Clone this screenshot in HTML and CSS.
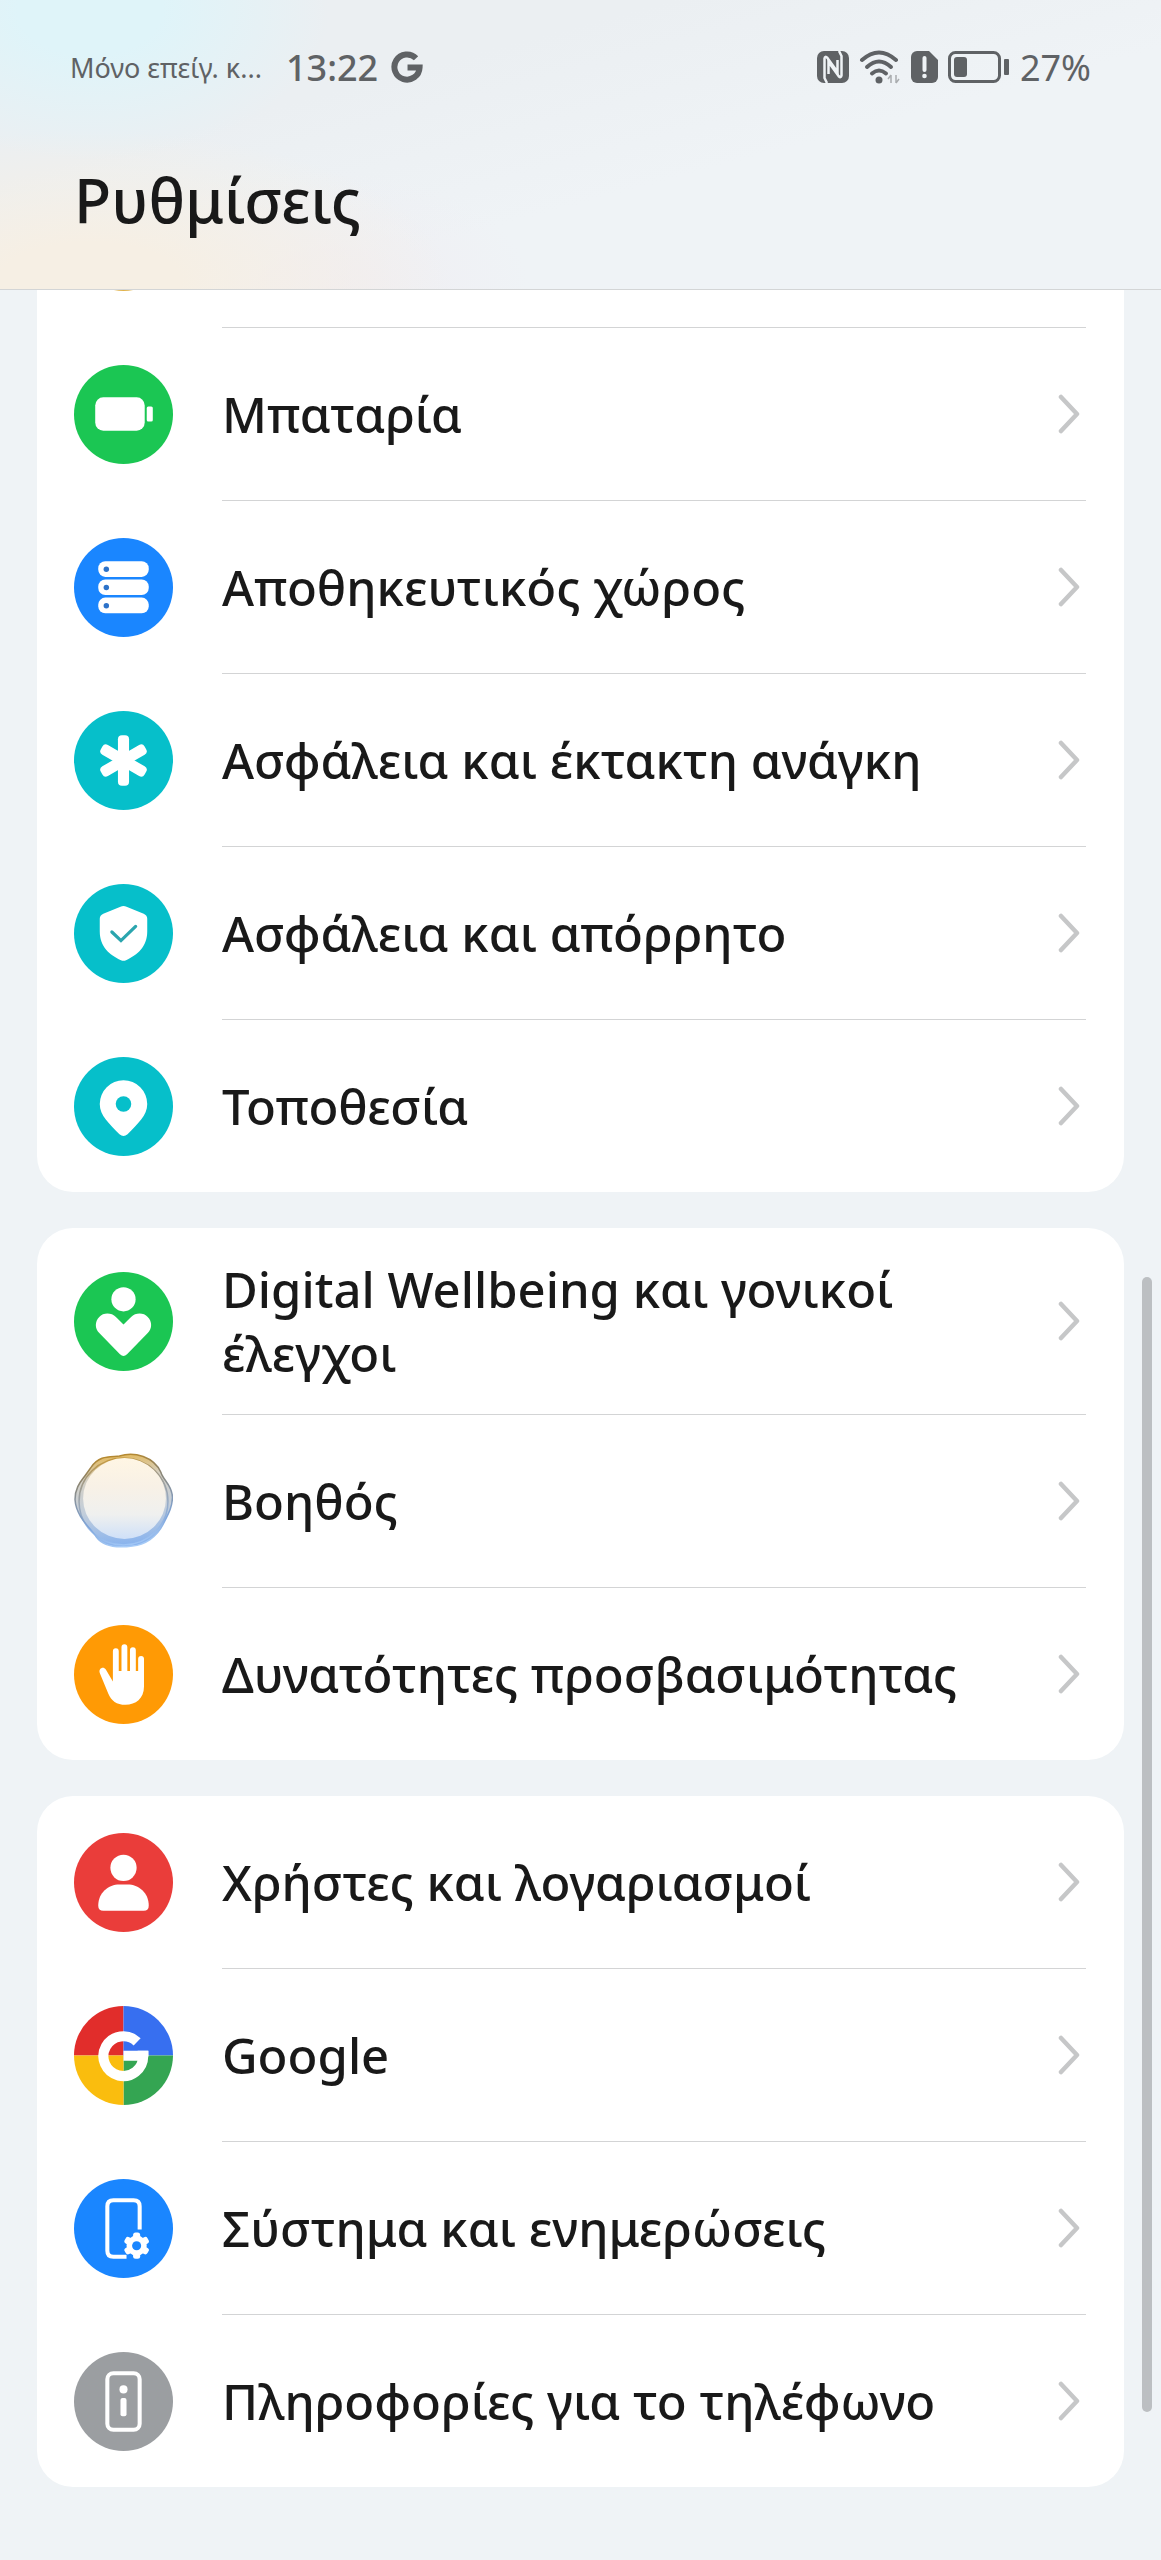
FILE: index.html
```html
<!DOCTYPE html>
<html lang="el">
<head>
  <meta charset="UTF-8">
  <meta name="viewport" content="width=device-width, initial-scale=1">
  <title>Ρυθμίσεις</title>
  <link rel="stylesheet" href="styles.css">
</head>
<body>

  <svg class="defs" aria-hidden="true">
    <symbol id="chevron" viewBox="0 0 28 44">
      <path d="M3 5 19 22 3 39" fill="none" stroke="#c6c7c8" stroke-width="4.5" stroke-linecap="round" stroke-linejoin="round"/>
    </symbol>
  </svg>

  <header class="top">
    <!-- Status bar -->
    <div class="status">
      <span class="carrier">Μόνο επείγ. κ...</span>
      <span class="clock">13:22</span>
      <svg class="google" viewBox="0 0 30 30" width="32" height="32" aria-label="Google">
        <path d="M23.5 6.8A11.8 11.8 0 1 0 26.8 15.5H15.5" fill="none" stroke="currentColor" stroke-width="5.6"/>
      </svg>
      <div class="status-icons">
        <svg viewBox="0 0 32 32" width="32" height="32" aria-label="NFC">
          <rect width="32" height="32" rx="7" fill="currentColor"/>
          <path d="M10 32 7.5 27V7.500Q8 4.500 10.500 7L20.500 21V9" fill="none" stroke="#eff3f6" stroke-width="2.5"/>
          <path d="M22 0 24.500 5V24.500Q24 27.500 21.500 25L11.500 11V23" fill="none" stroke="#eff3f6" stroke-width="2.5"/>
        </svg>
        <svg viewBox="0 0 42 34" width="42" height="34" aria-label="Wi-Fi">
          <g fill="none" stroke="currentColor" stroke-width="4" stroke-linecap="round">
            <path d="M3 10Q20 -5 37 10"/>
            <path d="M8 17Q20 6 32 17"/>
            <path d="M13 23.5Q20 17.5 27 23.5"/>
          </g>
          <circle cx="20" cy="30" r="3.5" fill="currentColor"/>
          <path d="M32 25V33M32 25 29 29M37 25V33M37 33 40 29" stroke="#a9acae" stroke-width="1.5" fill="none"/>
        </svg>
        <svg viewBox="0 0 27 32" width="27" height="32" aria-label="SIM">
          <path d="M6 0H18L27 9V26A6 6 0 0 1 21 32H6A6 6 0 0 1 0 26V6A6 6 0 0 1 6 0Z" fill="currentColor"/>
          <path d="M13.5 7V19" stroke="#eff3f6" stroke-width="4" stroke-linecap="round"/>
          <circle cx="13.5" cy="25" r="2.3" fill="#eff3f6"/>
        </svg>
        <svg viewBox="0 0 62 32" width="62" height="32" aria-hidden="true">
          <rect x="1.500" y="1.500" width="50" height="29" rx="6" fill="none" stroke="currentColor" stroke-width="3"/>
          <rect x="6" y="6" width="13" height="20" rx="3" fill="currentColor"/>
          <rect x="56" y="8" width="5" height="16" rx="1" fill="currentColor"/>
        </svg>
        <span class="percent">27%</span>
      </div>
    </div>
    <h1>Ρυθμίσεις</h1>
  </header>

  <main class="settings">

    <nav class="card">
      <a href="#" class="row" tabindex="-1" aria-hidden="true">
        <svg class="icon" viewBox="0 0 98 98"><circle cx="49" cy="49" r="49" fill="#e0b24a"/></svg>
        <span class="label"></span>
      </a>
      <a href="#" class="row">
        <svg class="icon" viewBox="0 0 98 98">
          <circle cx="49" cy="49" r="49" fill="#1bc653"/>
          <rect x="21" y="32" width="49" height="33" rx="8" fill="#fff"/>
          <rect x="72" y="41" width="6" height="15" rx="1.5" fill="#fff"/>
        </svg>
        <span class="label">Μπαταρία</span>
        <svg class="chevron"><use href="#chevron"/></svg>
      </a>
      <a href="#" class="row">
        <svg class="icon" viewBox="0 0 98 98">
          <circle cx="49" cy="49" r="49" fill="#1a86ff"/>
          <g fill="#fff">
            <rect x="24" y="23" width="50" height="15.5" rx="7"/>
            <rect x="24" y="41" width="50" height="15.5" rx="7"/>
            <rect x="24" y="59" width="50" height="15.5" rx="7"/>
          </g>
          <g fill="#2c72c9">
            <circle cx="32" cy="31" r="2.7"/>
            <circle cx="32" cy="49" r="2.7"/>
            <circle cx="32" cy="67" r="2.7"/>
          </g>
        </svg>
        <span class="label">Αποθηκευτικός χώρος</span>
        <svg class="chevron"><use href="#chevron"/></svg>
      </a>
      <a href="#" class="row">
        <svg class="icon" viewBox="0 0 98 98">
          <circle cx="49" cy="49" r="49" fill="#06bfca"/>
          <g fill="#fff">
            <rect x="43.5" y="24" width="11" height="50" rx="4"/>
            <rect x="43.5" y="24" width="11" height="50" rx="4" transform="rotate(60 49 49)"/>
            <rect x="43.5" y="24" width="11" height="50" rx="4" transform="rotate(120 49 49)"/>
          </g>
        </svg>
        <span class="label">Ασφάλεια και έκτακτη ανάγκη</span>
        <svg class="chevron"><use href="#chevron"/></svg>
      </a>
      <a href="#" class="row">
        <svg class="icon" viewBox="0 0 98 98">
          <circle cx="49" cy="49" r="49" fill="#06bfca"/>
          <path d="M46 22.5Q49 21 52 22.5L69 29.5Q72.5 31 72.5 34.5V47C72.5 62 63 70 51.5 75.5Q49 76.5 46.5 75.5C35 70 25.5 62 25.5 47V34.5Q25.5 31 29 29.5Z" fill="#fff"/>
          <path d="M37.5 47.5 46.5 56 61 42" fill="none" stroke="#2aa5ae" stroke-width="3.2" stroke-linecap="round"/>
        </svg>
        <span class="label">Ασφάλεια και απόρρητο</span>
        <svg class="chevron"><use href="#chevron"/></svg>
      </a>
      <a href="#" class="row">
        <svg class="icon" viewBox="0 0 98 98">
          <circle cx="49" cy="49" r="49" fill="#06bfca"/>
          <path d="M49 23A23.5 23.5 0 0 0 25.5 46.5C25.5 58 35 66 45 76.5Q49 80 53 76.5C63 66 72.5 58 72.5 46.5A23.5 23.5 0 0 0 49 23Z" fill="#fff"/>
          <circle cx="49" cy="46.5" r="7.7" fill="#06bfca"/>
        </svg>
        <span class="label">Τοποθεσία</span>
        <svg class="chevron"><use href="#chevron"/></svg>
      </a>
    </nav>

    <nav class="card">
      <a href="#" class="row">
        <svg class="icon" viewBox="0 0 98 98">
          <circle cx="49" cy="49" r="49" fill="#1bc653"/>
          <circle cx="49" cy="27" r="12" fill="#fff"/>
          <path d="M49 52 41.5 44.5C37 40 29 40 25 44.5C20.5 49 20.5 56 25 60.5L45.5 81.5Q49 85 52.5 81.5L73 60.5C77.5 56 77.5 49 73 44.5C69 40 61 40 56.5 44.5Z" fill="#fff"/>
        </svg>
        <span class="label">Digital Wellbeing και γονικοί έλεγχοι</span>
        <svg class="chevron"><use href="#chevron"/></svg>
      </a>
      <a href="#" class="row">
        <svg class="icon" viewBox="0 0 98 98">
          <defs>
            <linearGradient id="rim" x1="0.4" y1="0" x2="0.55" y2="1">
              <stop offset="0" stop-color="#b98a2c"/>
              <stop offset="0.2" stop-color="#8d8164"/>
              <stop offset="0.45" stop-color="#8794a3"/>
              <stop offset="0.75" stop-color="#7ea6dd"/>
              <stop offset="1" stop-color="#a9cdf8"/>
            </linearGradient>
            <linearGradient id="film" x1="0.4" y1="0" x2="0.5" y2="1">
              <stop offset="0" stop-color="#e3b95c"/>
              <stop offset="0.25" stop-color="#d5d0c4"/>
              <stop offset="0.6" stop-color="#c3cedb"/>
              <stop offset="1" stop-color="#86b2ef"/>
            </linearGradient>
            <linearGradient id="pearl" x1="0.5" y1="0" x2="0.5" y2="1">
              <stop offset="0" stop-color="#fff6e4"/>
              <stop offset="0.35" stop-color="#f8f1e6"/>
              <stop offset="0.7" stop-color="#eff0ef"/>
              <stop offset="1" stop-color="#cfe0f8"/>
            </linearGradient>
          </defs>
          <path d="M17 15C25 3 35 5 45 4C60 -1 79 5 86 20C88 28 97 32 97.5 45C97 56 93 62 88 72C82 84 70 92 58 93C44 95 29 94 22 84C16 75 2 64 1 47C1 34 8 28 12 22Z" fill="url(#film)" stroke="url(#rim)" stroke-width="1.5"/>
          <ellipse cx="49" cy="49" rx="44" ry="43" fill="none" stroke="url(#rim)" stroke-width="1.5" opacity="0.7"/>
          <ellipse cx="50" cy="46" rx="41" ry="40" fill="url(#pearl)"/>
        </svg>
        <span class="label">Βοηθός</span>
        <svg class="chevron"><use href="#chevron"/></svg>
      </a>
      <a href="#" class="row">
        <svg class="icon" viewBox="0 0 98 98">
          <circle cx="49" cy="49" r="49" fill="#ff9a05"/>
          <path d="M38.5 56V26A2.9 2.9 0 0 1 44.3 26V45.5H47V22A2.9 2.9 0 0 1 52.8 22V45.5H55.4V25A2.9 2.9 0 0 1 61.2 25V45.5H63.5V33.5A2.9 2.9 0 0 1 69.3 33.5V61C69.3 73 61 79 51 79C42 79 37 75 34 68L25.5 47.5C24 43 29 40.5 31.5 44Z" fill="#fff"/>
        </svg>
        <span class="label">Δυνατότητες προσβασιμότητας</span>
        <svg class="chevron"><use href="#chevron"/></svg>
      </a>
    </nav>

    <nav class="card">
      <a href="#" class="row">
        <svg class="icon" viewBox="0 0 98 98">
          <circle cx="49" cy="49" r="49" fill="#ea3d3a"/>
          <circle cx="49" cy="34.5" r="13" fill="#fff"/>
          <path d="M24 72C24 59 34 51 45 51H53C64 51 74 59 74 72Q74 77 69 77H29Q24 77 24 72Z" fill="#fff"/>
        </svg>
        <span class="label">Χρήστες και λογαριασμοί</span>
        <svg class="chevron"><use href="#chevron"/></svg>
      </a>
      <a href="#" class="row">
        <svg class="icon" viewBox="0 0 98 98">
          <path d="M49 49V0A49 49 0 0 0 0 49Z" fill="#e12d2b"/>
          <path d="M49 49H98A49 49 0 0 0 49 0Z" fill="#376ff0"/>
          <path d="M49 49V98A49 49 0 0 0 98 49Z" fill="#34a552"/>
          <path d="M49 49H0A49 49 0 0 0 49 98Z" fill="#fabd0e"/>
          <path d="M62.5 35.5A19.7 19.7 0 1 0 68.5 49.3H49" fill="none" stroke="#fff" stroke-width="10"/>
          <path d="M63 44.3H73.7V50H63Z" fill="#fff"/>
        </svg>
        <span class="label">Google</span>
        <svg class="chevron"><use href="#chevron"/></svg>
      </a>
      <a href="#" class="row">
        <svg class="icon" viewBox="0 0 98 98">
          <circle cx="49" cy="49" r="49" fill="#1a86ff"/>
          <path d="M65 50V27Q65 21 59 21H39Q33 21 33 27V71Q33 77 39 77H52" fill="none" stroke="#fff" stroke-width="4"/>
          <g fill="#fff" transform="translate(62 66)">
            <circle r="10"/>
            <rect x="-3.5" y="-13" width="7" height="26" rx="2.5"/>
            <rect x="-3.5" y="-13" width="7" height="26" rx="2.5" transform="rotate(60)"/>
            <rect x="-3.5" y="-13" width="7" height="26" rx="2.5" transform="rotate(120)"/>
            <circle r="4.5" fill="#1a86ff"/>
          </g>
        </svg>
        <span class="label">Σύστημα και ενημερώσεις</span>
        <svg class="chevron"><use href="#chevron"/></svg>
      </a>
      <a href="#" class="row">
        <svg class="icon" viewBox="0 0 98 98">
          <circle cx="49" cy="49" r="49" fill="#9b9ea1"/>
          <rect x="33" y="21" width="32" height="56" rx="6" fill="none" stroke="#fff" stroke-width="4"/>
          <circle cx="49" cy="37" r="4" fill="#fff"/>
          <rect x="46" y="45.5" width="6" height="18" rx="2" fill="#fff"/>
        </svg>
        <span class="label">Πληροφορίες για το τηλέφωνο</span>
        <svg class="chevron"><use href="#chevron"/></svg>
      </a>
    </nav>

  </main>

  <div class="scrollbar"></div>

</body>
</html>
```

FILE: styles.css
```css
* {
  box-sizing: border-box;
}

body {
  margin: 0;
  min-height: 100vh;
  background: #eff3f6;
  color: #191919;
  font-family: "Noto Sans", "Open Sans", sans-serif;
  font-weight: 500;
}

.defs {
  display: none;
}

/* Header stays over the list while it scrolls */
.top {
  position: fixed;
  top: 0;
  left: 0;
  right: 0;
  z-index: 2;
  padding: 43px 70px 49px;
  border-bottom: 1px solid #d3d5d6;
  background:
    radial-gradient(ellipse 240px 150px at 90px 10px, #dff4f9 30%, transparent),
    radial-gradient(ellipse 360px 150px at 90px 280px, #f6efe4 25%, transparent),
    radial-gradient(ellipse 200px 120px at 330px 290px, #f0edf2, transparent),
    linear-gradient(165deg, #ebeff2 30%, #eff3f6 60%);
}

.status {
  display: flex;
  align-items: center;
  height: 48px;
  color: #5f6265;
}

.carrier {
  font-size: 27px;
  font-weight: 400;
}

.clock {
  margin: 0 13px 0 24px;
  font-size: 36px;
}

.status-icons {
  display: flex;
  align-items: center;
  gap: 10px;
  margin-left: auto;
}

.percent {
  font-size: 36px;
  font-weight: 400;
}

h1 {
  margin: 69px 0 0 4px;
  font-size: 61px;
  font-weight: 500;
  line-height: 80px;
}

.settings {
  display: flex;
  flex-direction: column;
  gap: 36px;
  padding: 155px 37px 73px;
}

.card {
  padding: 0 38px 0 37px;
  border-radius: 36px;
  background: #fff;
}

.row {
  position: relative;
  display: flex;
  align-items: center;
  gap: 49px;
  min-height: 172px;
  padding: 29px 0;
  color: inherit;
  text-decoration: none;
}

.row + .row {
  margin-top: 1px;
}

/* Divider runs from the label to the right edge */
.row + .row::before {
  content: '';
  position: absolute;
  top: -1px;
  left: 148px;
  right: 0;
  height: 1px;
  background: #d3d4d5;
}

.icon {
  flex: none;
  width: 99px;
  height: 99px;
}

.label {
  flex: 1;
  font-size: 49px;
  line-height: 64px;
}

.chevron {
  flex: none;
  width: 28px;
  height: 44px;
}

.scrollbar {
  position: fixed;
  top: 1277px;
  right: 9px;
  width: 10px;
  height: 1135px;
  border-radius: 5px;
  background: #bcbfc2;
}
```
